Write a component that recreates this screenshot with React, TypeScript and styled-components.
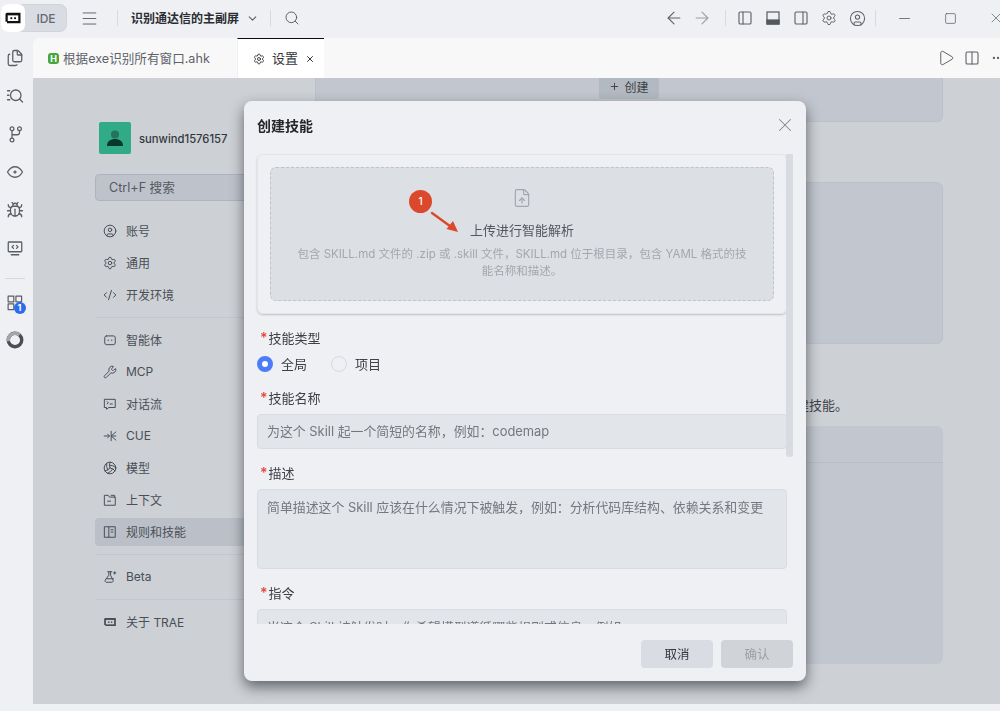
import React from 'react';
import styled, { createGlobalStyle } from 'styled-components';
import {
  ArrowLeft, ArrowRight, Bug, ChevronDown, CircleUser, CodeXml, Files, FileUp,
  Menu, Minus, PanelLeft, PanelRight, Play, Plus, Search, Settings, Square,
  Volleyball, Wrench, X, Columns2, Ellipsis,
} from 'lucide-react';

const Global = createGlobalStyle`
  html, body { margin: 0; padding: 0; height: 100%; overflow: hidden; background: #eef0f4; }
  body { font-family: Inter, "Noto Sans CJK SC", "Noto Sans", sans-serif; color: #34373c; }
  * { box-sizing: border-box; }
  #root { height: 100%; }
`;

const Page = styled.div`
  width: 1000px; height: 711px; display: flex; flex-direction: column; overflow: hidden; background: #eef0f4;
`;
const TitleBar = styled.header`
  height: 38px; flex: none; display: flex; align-items: center; padding-bottom: 2px; color: #5e6268;
`;
const ModePill = styled.div`
  margin-left: 1px; width: 66px; height: 28px; display: flex; align-items: center;
  background: #d9dce3; border-radius: 8px; box-shadow: inset 0 0 0 1px #d0d4db;
`;
const LogoBox = styled.div`
  width: 24px; height: 28px; background: #fff; border-radius: 7px; display: flex; align-items: center; justify-content: center;
`;
const ModeText = styled.span`
  flex: 1; text-align: center; font-size: 12px; font-weight: 500; color: #666a70;
`;
const IconSlot = styled.span<{ $w?: number; $dim?: boolean }>`
  width: ${p => p.$w ?? 28}px; height: 24px; display: flex; align-items: center; justify-content: center; flex: none;
  color: ${p => (p.$dim ? '#9a9da3' : 'inherit')};
`;
const VSep = styled.span<{ $l?: number; $r?: number }>`
  width: 1px; height: 16px; background: #d6d9e1; flex: none;
  margin-left: ${p => p.$l ?? 0}px; margin-right: ${p => p.$r ?? 0}px;
`;
const ProjectName = styled.span`
  margin: 0 0 2px 13px; font-size: 12px; font-weight: 700; color: #2b2d31; white-space: nowrap;
`;
const Spacer = styled.div`flex: 1;`;

const Workspace = styled.div`flex: 1; display: flex; min-height: 0;`;
const ActivityBar = styled.nav`
  width: 33px; flex: none; display: flex; flex-direction: column; align-items: center; padding-top: 1px; color: #5b5f66;
`;
const ActivityItem = styled.div`
  width: 24px; height: 38px; display: flex; align-items: center; justify-content: center; position: relative; left: -2px;
`;
const ActivitySep = styled.div`
  width: 20px; height: 1px; background: #d5d8e0; margin: 11px 0 4px; position: relative; left: -2px;
`;
const CountBadge = styled.span`
  position: absolute; left: 11px; top: 19px; width: 12px; height: 12px; border-radius: 50%;
  background: #2a6bf0; color: #fff; font-size: 9px; font-weight: 700; line-height: 12px; text-align: center;
`;

const Editor = styled.main`flex: 1; min-width: 0; display: flex; flex-direction: column;`;
const TabBar = styled.div`
  height: 40px; flex: none; display: flex; background: #f8f8f9; border-top-left-radius: 6px; color: #5b5f66;
`;
const FileTab = styled.div`
  width: 204px; display: flex; align-items: center; padding-left: 15px; gap: 4px; font-size: 12.6px; color: #5f6369;
`;
const TabText = styled.span`margin-bottom: 2px;`;
const HBadge = styled.span`
  width: 11px; height: 11px; border-radius: 3px; background: #46a63c; color: #fff; font-size: 9px; font-weight: 700;
  line-height: 11px; text-align: center;
`;
const ActiveTab = styled.div`
  width: 87px; background: #fff; border-top: 1px solid #0b0b0b; border-left: 1px solid #eef0f4;
  display: flex; align-items: center; padding-left: 15px; font-size: 13px; color: #33363b;
  span { margin: 0 0 2px 7px; }
  svg:last-child { margin-left: 7px; }
`;
const TabActions = styled.div`
  margin-left: auto; margin-right: -11px; display: flex; align-items: center;
`;

const Content = styled.div`
  flex: 1; min-height: 0; background: #cdd1d5; display: flex; padding: 0 57px 0 62px; overflow: hidden;
`;
const Sidebar = styled.aside`
  width: 200px; margin-right: 20px; flex: none; padding-top: 44px;
`;
const Profile = styled.div`
  display: flex; align-items: center; gap: 8px; padding-left: 4px; height: 32px;
`;
const Avatar = styled.div`
  width: 32px; height: 32px; border-radius: 2px; background: #31ab85; display: flex; align-items: center; justify-content: center;
`;
const UserName = styled.span`
  font-size: 11.25px; font-weight: 500; color: #33373c; margin-top: 1px;
`;
const SearchBox = styled.div`
  margin-top: 20px; height: 27px; border: 1px solid #adb3bf; border-radius: 4px; background: #bdc2cb;
  display: flex; align-items: center; padding: 0 0 2px 13px; font-size: 12.6px; color: #55595f;
`;
const NavGroup = styled.div<{ $first?: boolean }>`
  display: flex; flex-direction: column; gap: 4px; margin-top: ${p => (p.$first ? 16 : 8)}px;
`;
const NavRule = styled.div`
  height: 1px; background: #c3c7cd; margin-top: 8px;
`;
const NavRow = styled.div<{ $active?: boolean }>`
  height: 28px; display: flex; align-items: center; gap: 9px; padding-left: 8px; border-radius: 4px;
  font-size: 12px; color: #4a4e55; background: ${p => (p.$active ? '#bbc0c8' : 'transparent')};
`;
const NavText = styled.span`margin-bottom: 1px;`;

const MainColumn = styled.section`flex: 1; min-width: 0; display: flex; flex-direction: column;`;
const TopCard = styled.div`
  height: 44px; background: #c2c6ce; border: 1px solid #bcc0c9; border-top: 0; border-radius: 0 0 6px 6px;
  display: flex; justify-content: center; align-items: flex-start;
`;
const CreateButton = styled.div`
  width: 60px; height: 21px; background: #b3b9c1; border-radius: 0 0 3px 3px; display: flex; align-items: center; justify-content: center;
  gap: 4px; font-size: 12px; color: #3c4046; padding-bottom: 4px;
`;
const BlankCard = styled.div`
  height: 162px; margin-top: 60px; background: #c2c6ce; border: 1px solid #bcc0c9; border-radius: 6px;
`;
const Hint = styled.p`
  margin: 52px 0 0; height: 18px; line-height: 18px; padding-right: 95px; text-align: right; font-size: 13px; color: #3f434a;
`;
const TableCard = styled.div`
  margin-top: 12px; height: 238px; background: #c2c6ce; border-radius: 6px;
`;
const TableHead = styled.div`
  height: 37px; border-bottom: 1px solid #b8bcc6;
`;
const StatusBar = styled.div`height: 7px; flex: none; background: #eef0f4;`;

const Modal = styled.div`
  position: fixed; left: 244px; top: 101px; width: 562px; height: 580px; background: #eef0f4; border-radius: 8px;
  box-shadow: 0 6px 14px rgba(30, 34, 40, 0.62); display: flex; flex-direction: column;
`;
const ModalHead = styled.div`
  height: 53px; flex: none; display: flex; align-items: center; justify-content: space-between; padding: 0 10px 6px 13px; color: #85888f;
`;
const ModalTitle = styled.h2`
  margin: 0; font-size: 14px; font-weight: 700; color: #24262a;
`;
const ModalBody = styled.div`
  flex: 1; min-height: 0; overflow: hidden; padding: 0 19px 0 13px;
`;
const ScrollThumb = styled.div`
  position: absolute; left: 542px; top: 53px; width: 7px; height: 303px; border-radius: 0 0 3px 3px; background: #d8dbe2;
`;
const UploadCard = styled.div`
  height: 160px; padding: 12px; border: 1px solid #e2e4e9; border-radius: 6px; box-shadow: 0 1px 2px rgba(60, 64, 70, 0.28);
`;
const DropZone = styled.div`
  position: relative; height: 134px; background: #dcdfe4; border: 1px dashed #bfc3ca; border-radius: 6px;
  display: flex; flex-direction: column; align-items: center; padding-top: 20px; color: #a2a6af;
`;
const DropTitle = styled.div`
  margin-top: 13px; font-size: 13px; line-height: 18px; color: #54575d;
`;
const DropText = styled.div`
  margin-top: 7px; width: 452px; text-align: center; font-size: 11.5px; line-height: 17px; color: #a4a7ac;
`;
const Marker = styled.span`
  position: absolute; left: 138px; top: 22px; width: 23px; height: 23px; border-radius: 50%; background: #dc482c;
  color: #fff; font-size: 10px; font-weight: 500; line-height: 23px; text-align: center;
`;
const MarkerArrow = styled.svg`
  position: absolute; left: 159px; top: 43px; width: 30px; height: 24px;
`;
const Label = styled.label`
  display: block; margin-top: 14px; height: 20px; line-height: 19px; font-size: 13px; color: #3e4146;
  &::before { content: '*'; color: #e5483c; margin-right: 1px; margin-left: 3px; font-size: 14px; font-weight: 600; }
`;
const RadioRow = styled.div`
  margin-top: 6px; height: 20px; display: flex; align-items: center; font-size: 13px; color: #3e4146;
`;
const RadioDot = styled.span<{ $on?: boolean }>`
  width: 16px; height: 16px; border-radius: 50%; flex: none; margin-right: 8px;
  background: ${p => (p.$on ? '#fff' : 'transparent')};
  border: ${p => (p.$on ? '5px solid #4d7cfa' : '1px solid #d6d9e1')};
`;
const RadioText = styled.span`
  width: 50px; margin-bottom: 2px;
`;
const fieldCss = `
  display: block; width: 100%; margin: 6px 0 0; padding: 0 9px; font-family: inherit; font-size: 12.9px; color: #33363b;
  background: #e2e5ea; border: 1px solid #d8dbe2; border-radius: 4px; outline: none; resize: none;
  &::placeholder { color: #74787e; opacity: 1; }
`;
const TextInput = styled.input`
  ${fieldCss}
  height: 35px;
`;
const TextArea = styled.textarea<{ $h: number }>`
  ${fieldCss}
  height: ${p => p.$h}px; padding-top: 9px; line-height: 18px;
`;
const ModalFoot = styled.div`
  height: 57px; flex: none; display: flex; justify-content: flex-end; gap: 8px; padding: 16px 13px 0 0;
`;
const FootButton = styled.button<{ $muted?: boolean }>`
  width: 72px; height: 28px; border: 0; border-radius: 4px; padding: 0 0 2px; font-family: inherit; font-size: 12.5px;
  background: ${p => (p.$muted ? '#d0d4d8' : '#d9dce3')}; color: ${p => (p.$muted ? '#9da0a5' : '#33363b')};
`;

const Svg: React.FC<{ size?: number; width?: number; children: React.ReactNode }> = ({ size = 14, width = 1.7, children }) => (
  <svg width={size} height={size} viewBox="0 0 24 24" fill="none" stroke="currentColor" strokeWidth={width} strokeLinecap="round" strokeLinejoin="round">
    {children}
  </svg>
);

const TraeLogo: React.FC<{ size?: number; color?: string; inner?: string }> = ({ size = 18, color = '#111', inner = '#fff' }) => (
  <svg width={size} height={size} viewBox="0 0 24 24">
    <path fill={color} d="M4 5h18v14H4v-2H2V7a2 2 0 0 1 2-2z" />
    <rect x="5" y="8.5" width="14" height="7.5" fill={inner} />
    <rect x="8.5" y="11" width="2.5" height="2.5" fill={color} />
    <rect x="13.5" y="11" width="2.5" height="2.5" fill={color} />
  </svg>
);

const EyePlus = () => (
  <Svg size={18}>
    <path d="M2 12s4-7 10-7 10 7 10 7-4 7-10 7-10-7-10-7z" />
    <path d="M12 10.5v3M10.5 12h3" />
  </Svg>
);
const ScreenCode = () => (
  <Svg size={18}>
    <rect x="3" y="4" width="18" height="13" rx="1" />
    <path d="M10 8.5 8 10.5l2 2M14 8.5l2 2-2 2M7 21h10" />
  </Svg>
);
const SearchList = () => (
  <Svg size={18}>
    <circle cx="13" cy="11" r="7" />
    <path d="m18 16 4 4M2 5h3M2 11h2M2 17h3" />
  </Svg>
);
const BranchIcon = () => (
  <Svg size={18}>
    <circle cx="8" cy="5" r="2.5" />
    <circle cx="18" cy="5" r="2.5" />
    <circle cx="8" cy="20" r="2.5" />
    <path d="M8 7.5v10M18 7.5V10a3 3 0 0 1-3 3H8" />
  </Svg>
);
const GridIcon = () => (
  <Svg size={17}>
    <rect x="3" y="3" width="8" height="8" />
    <rect x="14" y="3" width="8" height="8" />
    <rect x="3" y="14" width="8" height="8" />
  </Svg>
);
const BotIcon = () => (
  <Svg>
    <rect x="3" y="5" width="18" height="15" rx="3" />
    <path d="M9 12v1M15 12v1" />
  </Svg>
);
const FlowIcon = () => (
  <Svg>
    <path d="M3 4h18v14H10l-4 3v-3H3z" />
    <path d="m7 8 2 2-2 2M12 12h4" />
  </Svg>
);
const CueIcon = () => (
  <Svg>
    <path d="M2 12h9M8 9l3 3-3 3M14 4v16M22 5l-8 7 8 7M15 12h7" />
  </Svg>
);
const ContextIcon = () => (
  <Svg>
    <path d="M3 4h6l2 3h10v14H3zM14 4h6v3M8 14h5" />
  </Svg>
);
const RulesIcon = () => (
  <Svg>
    <rect x="3" y="3" width="18" height="18" />
    <path d="M10 3v18M14 8h3M14 12h3" />
  </Svg>
);
const BetaIcon = () => (
  <Svg>
    <path d="M8 3h7M10 3v6l-6 8a2.5 2.5 0 0 0 2 4h9a2.5 2.5 0 0 0 2-4l-4-8V3M6 15h12M20 3v4M18 5h4" />
  </Svg>
);
const Spinner = () => (
  <svg width="18" height="18" viewBox="0 0 24 24" fill="none">
    <circle cx="12" cy="12" r="9" stroke="#4a4d52" strokeWidth="4.5" />
    <circle cx="12" cy="12" r="9" stroke="#a3a6ab" strokeWidth="4.5" strokeDasharray="22 60" transform="rotate(170 12 12)" />
  </svg>
);
const PanelBottomFilled = () => (
  <svg width="16" height="16" viewBox="0 0 24 24" fill="none" stroke="#55595f" strokeWidth="1.8">
    <rect x="3" y="3" width="18" height="18" />
    <rect x="3" y="15" width="18" height="6" fill="#55595f" />
  </svg>
);

const PersonIcon = () => (
  <svg width="24" height="24" viewBox="0 0 24 24">
    <circle cx="12" cy="8.5" r="4" fill="#22745c" />
    <path d="M4 20c0-5 3.5-7 8-7s8 2 8 7z" fill="#06382e" />
  </svg>
);

const I = { size: 14, strokeWidth: 1.7 } as const;

const nav = [
  [
    { t: '账号', i: <CircleUser {...I} /> },
    { t: '通用', i: <Settings {...I} /> },
    { t: '开发环境', i: <CodeXml {...I} /> },
  ],
  [
    { t: '智能体', i: <BotIcon /> },
    { t: 'MCP', i: <Wrench {...I} /> },
    { t: '对话流', i: <FlowIcon /> },
    { t: 'CUE', i: <CueIcon /> },
    { t: '模型', i: <Volleyball {...I} /> },
    { t: '上下文', i: <ContextIcon /> },
    { t: '规则和技能', i: <RulesIcon />, active: true },
  ],
  [{ t: 'Beta', i: <BetaIcon /> }],
  [{ t: '关于 TRAE', i: <TraeLogo size={14} color="#4a4e55" inner="#cdd1d5" /> }],
];

export default function App() {
  return (
    <Page>
      <Global />
      <TitleBar>
        <ModePill>
          <LogoBox><TraeLogo /></LogoBox>
          <ModeText>IDE</ModeText>
        </ModePill>
        <IconSlot $w={44}><Menu size={19} strokeWidth={1.2} /></IconSlot>
        <VSep $l={6} />
        <ProjectName>识别通达信的主副屏</ProjectName>
        <IconSlot $w={26}><ChevronDown size={13} strokeWidth={2} /></IconSlot>
        <VSep $l={5} />
        <IconSlot $w={41}><Search size={16} strokeWidth={1.5} /></IconSlot>
        <Spacer />
        <IconSlot><ArrowLeft size={20} strokeWidth={1.3} /></IconSlot>
        <IconSlot $dim><ArrowRight size={20} strokeWidth={1.3} /></IconSlot>
        <VSep $l={9} $r={5} />
        <IconSlot><PanelLeft size={16} strokeWidth={1.7} /></IconSlot>
        <IconSlot><PanelBottomFilled /></IconSlot>
        <IconSlot><PanelRight size={16} strokeWidth={1.7} /></IconSlot>
        <IconSlot><Settings size={16} strokeWidth={1.5} /></IconSlot>
        <IconSlot><CircleUser size={17} strokeWidth={1.5} /></IconSlot>
        <VSep $l={4} />
        <IconSlot $w={46} style={{ marginLeft: 5 }}><Minus size={17} strokeWidth={1.2} /></IconSlot>
        <IconSlot $w={46}><Square size={13} strokeWidth={1.4} /></IconSlot>
        <IconSlot $w={46} style={{ marginRight: -19 }}><X size={16} strokeWidth={1.1} /></IconSlot>
      </TitleBar>
      <Workspace>
        <ActivityBar>
          <ActivityItem><Files size={18} strokeWidth={1.7} /></ActivityItem>
          <ActivityItem><SearchList /></ActivityItem>
          <ActivityItem><BranchIcon /></ActivityItem>
          <ActivityItem><EyePlus /></ActivityItem>
          <ActivityItem><Bug size={18} strokeWidth={1.7} /></ActivityItem>
          <ActivityItem><ScreenCode /></ActivityItem>
          <ActivitySep />
          <ActivityItem>
            <GridIcon />
            <CountBadge>1</CountBadge>
          </ActivityItem>
          <ActivityItem><Spinner /></ActivityItem>
        </ActivityBar>
        <Editor>
          <TabBar>
            <FileTab><HBadge>H</HBadge><TabText>根据exe识别所有窗口.ahk</TabText></FileTab>
            <ActiveTab>
              <Settings size={12} strokeWidth={1.8} />
              <span>设置</span>
              <X size={10} strokeWidth={2.4} />
            </ActiveTab>
            <TabActions>
              <IconSlot $w={26}><Play size={18} strokeWidth={1.3} /></IconSlot>
              <IconSlot $w={26}><Columns2 size={16} strokeWidth={1.6} /></IconSlot>
              <IconSlot $w={26}><Ellipsis size={14} strokeWidth={2} /></IconSlot>
            </TabActions>
          </TabBar>
          <Content>
            <Sidebar>
              <Profile>
                <Avatar><PersonIcon /></Avatar>
                <UserName>sunwind1576157</UserName>
              </Profile>
              <SearchBox>Ctrl+F 搜索</SearchBox>
              {nav.map((group, gi) => (
                <React.Fragment key={gi}>
                  {gi > 0 && <NavRule />}
                  <NavGroup $first={gi === 0}>
                    {group.map(row => (
                      <NavRow key={row.t} $active={'active' in row}>
                        {row.i}
                        <NavText>{row.t}</NavText>
                      </NavRow>
                    ))}
                  </NavGroup>
                </React.Fragment>
              ))}
            </Sidebar>
            <MainColumn>
              <TopCard>
                <CreateButton><Plus size={11} strokeWidth={2} />创建</CreateButton>
              </TopCard>
              <BlankCard />
              <Hint>创建技能。</Hint>
              <TableCard><TableHead /></TableCard>
            </MainColumn>
          </Content>
          <StatusBar />
        </Editor>
      </Workspace>
      <Modal>
        <ModalHead>
          <ModalTitle>创建技能</ModalTitle>
          <X size={22} strokeWidth={1.1} />
        </ModalHead>
        <ModalBody>
          <UploadCard>
            <DropZone>
              <FileUp size={20} strokeWidth={1.4} />
              <DropTitle>上传进行智能解析</DropTitle>
              <DropText>包含 SKILL.md 文件的 .zip 或 .skill 文件，SKILL.md 位于根目录，包含 YAML 格式的技能名称和描述。</DropText>
              <Marker>1</Marker>
              <MarkerArrow viewBox="0 0 30 24">
                <path d="M2 2 24 18" stroke="#dc482c" strokeWidth="2.4" strokeLinecap="round" />
                <path d="M28 21 16.5 18 23 10z" fill="#dc482c" />
              </MarkerArrow>
            </DropZone>
          </UploadCard>
          <Label>技能类型</Label>
          <RadioRow>
            <RadioDot $on />
            <RadioText>全局</RadioText>
            <RadioDot />
            <RadioText>项目</RadioText>
          </RadioRow>
          <Label>技能名称</Label>
          <TextInput placeholder="为这个 Skill 起一个简短的名称，例如：codemap" />
          <Label>描述</Label>
          <TextArea $h={80} placeholder="简单描述这个 Skill 应该在什么情况下被触发，例如：分析代码库结构、依赖关系和变更" />
          <Label>指令</Label>
          <TextArea $h={80} placeholder="当这个 Skill 被触发时，你希望模型遵循哪些规则或信息，例如" />
        </ModalBody>
        <ScrollThumb />
        <ModalFoot>
          <FootButton>取消</FootButton>
          <FootButton $muted>确认</FootButton>
        </ModalFoot>
      </Modal>
    </Page>
  );
}
